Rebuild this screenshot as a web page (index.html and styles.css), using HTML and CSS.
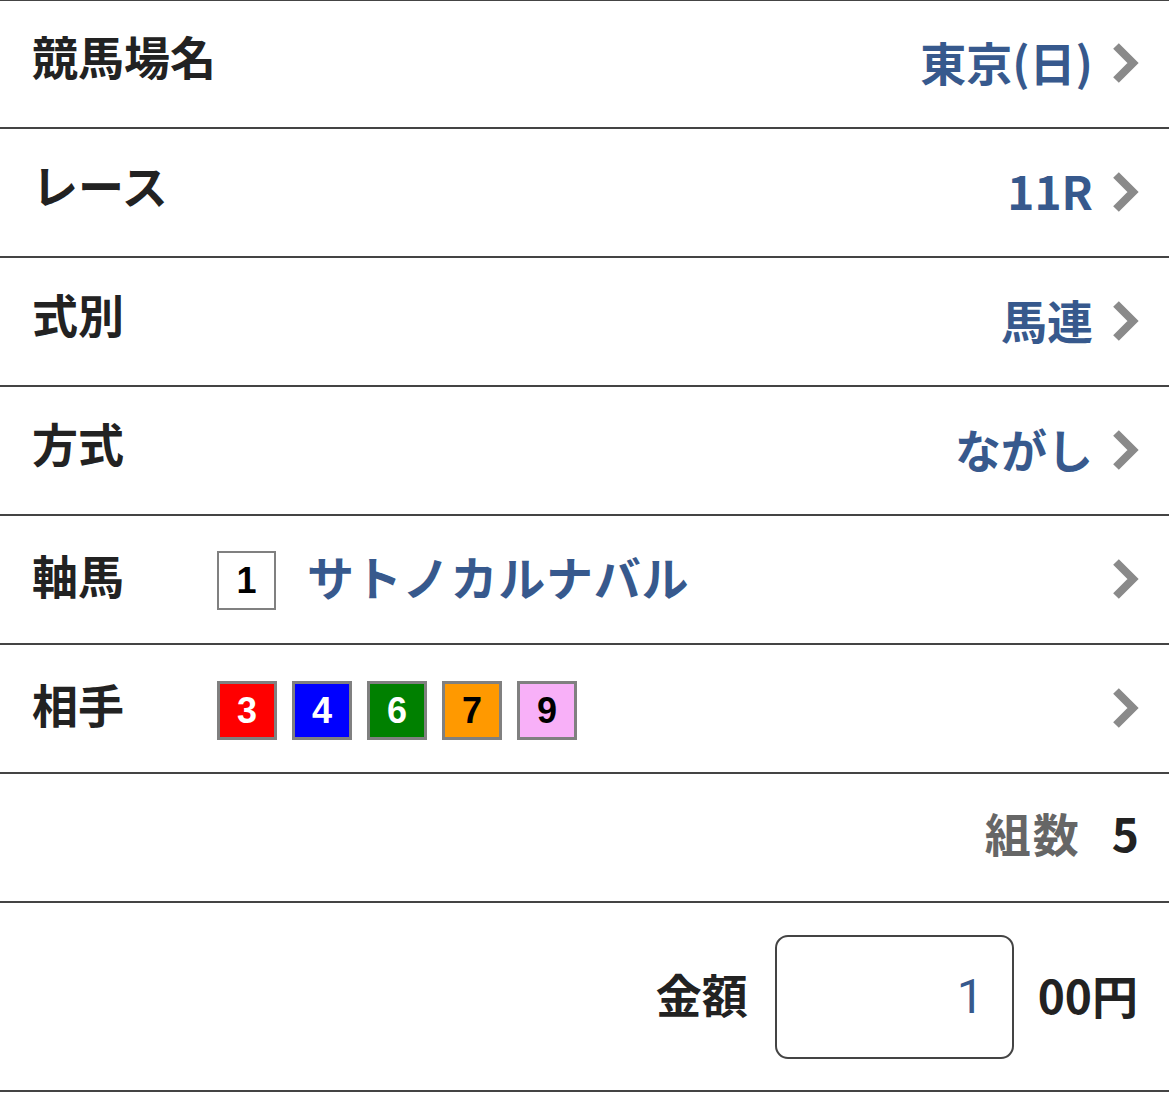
FILE: index.html
```html
<!DOCTYPE html>
<html lang="ja">
<head>
<meta charset="utf-8">
<link rel="stylesheet" href="styles.css">
</head>
<body>
<div class="list">
  <div class="row row-first">
    <span class="label">競馬場名</span>
    <span class="value">東京(日)</span>
    <svg class="chev" viewBox="0 0 26 40" width="26" height="40"><path d="M3 3 L20 20 L3 37"/></svg>
  </div>
  <div class="row">
    <span class="label">レース</span>
    <span class="value">11R</span>
    <svg class="chev" viewBox="0 0 26 40" width="26" height="40"><path d="M3 3 L20 20 L3 37"/></svg>
  </div>
  <div class="row">
    <span class="label">式別</span>
    <span class="value">馬連</span>
    <svg class="chev" viewBox="0 0 26 40" width="26" height="40"><path d="M3 3 L20 20 L3 37"/></svg>
  </div>
  <div class="row">
    <span class="label">方式</span>
    <span class="value">ながし</span>
    <svg class="chev" viewBox="0 0 26 40" width="26" height="40"><path d="M3 3 L20 20 L3 37"/></svg>
  </div>
  <div class="row">
    <span class="label label-fixed">軸馬</span>
    <span class="num num-white">1</span>
    <span class="horse">サトノカルナバル</span>
    <svg class="chev chev-end" viewBox="0 0 26 40" width="26" height="40"><path d="M3 3 L20 20 L3 37"/></svg>
  </div>
  <div class="row">
    <span class="label label-fixed">相手</span>
    <div class="nums">
      <span class="num num-red">3</span>
      <span class="num num-blue">4</span>
      <span class="num num-green">6</span>
      <span class="num num-orange">7</span>
      <span class="num num-pink">9</span>
    </div>
    <svg class="chev chev-end" viewBox="0 0 26 40" width="26" height="40"><path d="M3 3 L20 20 L3 37"/></svg>
  </div>
  <div class="row row-end row-count">
    <span class="count-label">組数</span>
    <span class="count">5</span>
  </div>
  <div class="row row-end row-amount">
    <span class="amount-label">金額</span>
    <div class="amount-box"><span class="amount-val">1</span></div>
    <span class="amount-unit">00円</span>
  </div>
</div>
</body>
</html>
```
FILE: styles.css
```css
html, body {
  margin: 0;
  padding: 0;
  background: #fff;
}
body {
  font-family: "Noto Sans CJK JP", "Noto Sans", sans-serif;
  color: #222;
}
.list {
  border-top: 1px solid #444;
}
.row {
  display: flex;
  align-items: center;
  height: 127px;
  padding: 0 30px 0 32px;
  border-bottom: 2px solid #444;
  box-sizing: content-box;
}
.row-first {
  height: 126px;
}
.label {
  font-size: 46px;
  font-weight: 700;
  color: #222;
  line-height: 1;
  position: relative;
  top: -9px;
}
.label-fixed {
  flex: 0 0 185px;
  top: -6px;
}
.value {
  margin-left: auto;
  margin-right: 20px;
  font-size: 46px;
  font-weight: 700;
  color: #37598d;
  line-height: 1;
  position: relative;
  top: -3px;
}
.chev {
  flex: 0 0 26px;
  display: block;
  position: relative;
  top: -1px;
}
.chev path {
  fill: none;
  stroke: #8a8a8a;
  stroke-width: 8;
}
.chev-end {
  margin-left: auto;
}
.num {
  box-sizing: border-box;
  width: 60px;
  height: 59px;
  display: flex;
  align-items: center;
  justify-content: center;
  font-family: "Liberation Sans", Arial, sans-serif;
  font-weight: 700;
  font-size: 36px;
  border: 3px solid #808080;
  position: relative;
  top: 2px;
}
.num-white { background: #fff; color: #000; border-width: 2px; width: 59px; top: 1px; }
.num-red { background: #ff0000; color: #fff; }
.num-blue { background: #0000ff; color: #fff; }
.num-green { background: #008000; color: #fff; }
.num-orange { background: #ff9900; color: #000; }
.num-pink { background: #f8b0f8; color: #000; }
.nums {
  display: flex;
  gap: 15px;
}
.horse {
  margin-left: 31px;
  font-size: 47px;
  letter-spacing: 0.8px;
  font-weight: 700;
  color: #37598d;
  line-height: 1;
  position: relative;
  top: -4px;
}
.row-end {
  justify-content: flex-end;
}
.row-count {
  padding-right: 30px;
}
.count-label {
  font-size: 46px;
  font-weight: 700;
  color: #666;
  line-height: 1;
  letter-spacing: 2px;
  position: relative;
  top: -6px;
}
.count {
  margin-left: 31px;
  font-size: 46px;
  font-weight: 700;
  color: #222;
  line-height: 1;
  position: relative;
  top: -6px;
}
.row-amount {
  height: 187px;
  padding-right: 31px;
}
.amount-label {
  font-size: 46px;
  font-weight: 700;
  color: #222;
  line-height: 1;
  position: relative;
  top: -4px;
}
.amount-box {
  box-sizing: border-box;
  width: 239px;
  height: 124px;
  margin: 0 24px 0 27px;
  border: 2.5px solid #444;
  border-radius: 13px;
  display: flex;
  align-items: center;
  justify-content: flex-end;
  padding-right: 28px;
}
.amount-val {
  font-family: Roboto, "Noto Sans", sans-serif;
  font-size: 48px;
  font-weight: 400;
  color: #37598d;
  line-height: 1;
}
.amount-unit {
  font-size: 46px;
  font-weight: 700;
  color: #222;
  line-height: 1;
  position: relative;
  top: -3px;
}
```
